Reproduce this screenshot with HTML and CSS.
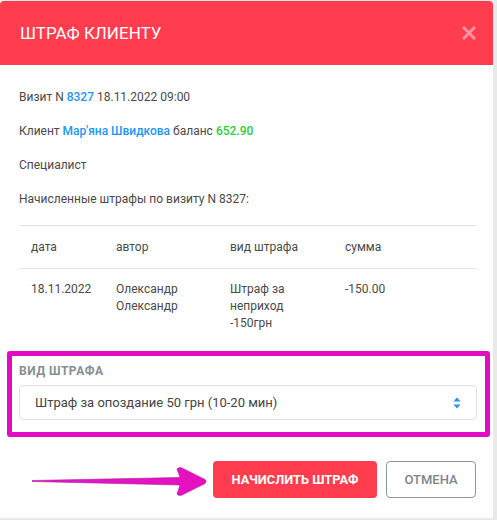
FILE: index.html
```html
<!DOCTYPE html>
<html lang="ru">
<head>
    <meta charset="UTF-8">
    <meta name="viewport" content="width=device-width, initial-scale=1.0">
    <title>Штраф клиенту</title>
    <link rel="stylesheet" href="styles.css">
</head>
<body>
    <div class="modal">
        <div class="modal-header">
            <h2>ШТРАФ КЛИЕНТУ</h2>
            <svg class="close" width="14" height="14" viewBox="0 0 14 14">
                <path d="M2 2 L12 12 M12 2 L2 12" stroke="#ffffff" stroke-width="3" stroke-linecap="square"/>
            </svg>
        </div>

        <div class="modal-body">
            <p>Визит N <a class="link">8327</a> 18.11.2022 09:00</p>
            <p>Клиент <a class="link">Мар'яна Швидкова</a> баланс <span class="balance">652.90</span></p>
            <p>Специалист</p>
            <p>Начисленные штрафы по визиту N 8327:</p>

            <table class="fines">
                <thead>
                    <tr>
                        <th class="c-date">дата</th>
                        <th class="c-author">автор</th>
                        <th class="c-type">вид штрафа</th>
                        <th>сумма</th>
                    </tr>
                </thead>
                <tbody>
                    <tr>
                        <td>18.11.2022</td>
                        <td>Олександр<br>Олександр</td>
                        <td>Штраф за<br>неприход<br>-150грн</td>
                        <td>-150.00</td>
                    </tr>
                </tbody>
            </table>

            <div class="form-group">
                <label>Вид штрафа</label>
                <div class="select">
                    <span>Штраф за опоздание 50 грн (10-20 мин)</span>
                    <svg width="8" height="12" viewBox="0 0 8 12">
                        <path d="M4 0.5 L7.5 4.5 L0.5 4.5 Z M4 11.5 L7.5 7.5 L0.5 7.5 Z" fill="#2196f3"/>
                    </svg>
                </div>
                <div class="highlight"></div>
            </div>
        </div>

        <div class="modal-footer">
            <svg class="pointer" width="180" height="34" viewBox="0 0 180 34">
                <defs>
                    <linearGradient id="ag" x1="0" y1="0" x2="1" y2="0">
                        <stop offset="0" stop-color="#d81fc6"/>
                        <stop offset="1" stop-color="#e60fbf"/>
                    </linearGradient>
                </defs>
                <path d="M0 15.5 L148 12.5 L145 4 Q147 1.5 150 3 L173 14.5 Q175 16.5 173 18.5 L150 30 Q147 31.5 145 29 L148 20 L0 16.5 Z" fill="url(#ag)" stroke="#b8139f" stroke-width="0.6"/>
            </svg>
            <button class="btn btn-danger">Начислить штраф</button>
            <button class="btn btn-outline">Отмена</button>
        </div>
    </div>
</body>
</html>
```

FILE: styles.css
```css
body {
    margin: 0;
    background-color: #e9e9ea;
    font-family: Roboto, "Liberation Sans", sans-serif;
}

.modal {
    width: 493px;
    margin-top: 1px;
    height: 517px;
    background: white;
    border-radius: 4px 4px 0 0;
    overflow: hidden;
    box-shadow: 0 1px 0 #c9c9c9;
}

.modal-header {
    height: 64px;
    background: #ff3d4f;
    display: flex;
    align-items: center;
    justify-content: space-between;
    padding: 0 16px 0 20px;
}

.modal-header h2 {
    margin: 0;
    font-size: 17px;
    font-weight: 400;
    color: white;
}

.close {
    opacity: 0.45;
    margin-right: 1px;
}

.modal-body {
    padding: 22px 16px 0 19px;
    font-size: 12px;
    color: #4a4a4a;
}

.modal-body p {
    margin: 0 0 14px;
    line-height: 20px;
}

.link {
    color: #2196f3;
    font-weight: 500;
}

.balance {
    color: #2ecc40;
    font-weight: 500;
}

.fines {
    width: 100%;
    margin-top: 16px;
    border-collapse: collapse;
    table-layout: fixed;
    font-size: 12px;
    color: #4a4a4a;
}

.fines th {
    text-align: left;
    font-weight: 400;
    height: 42px;
    padding: 0 12px;
    border-top: 1px solid #e4e4e4;
    border-bottom: 1px solid #e4e4e4;
}

.fines td {
    vertical-align: top;
    line-height: 17px;
    padding: 12px 12px 14px;
}

.c-date { width: 61px; }
.c-author { width: 90px; }
.c-type { width: 91px; }

.form-group {
    position: relative;
    margin-top: 7px;
    padding-top: 11px;
}

.form-group label {
    display: block;
    font-size: 12px;
    font-weight: 700;
    color: #868e96;
    text-transform: uppercase;
    letter-spacing: 0.5px;
    line-height: 14px;
    margin-bottom: 7px;
}

.select {
    height: 35px;
    border: 1px solid #e2e2e2;
    border-radius: 4px;
    display: flex;
    align-items: center;
    justify-content: space-between;
    padding: 0 15px;
    font-size: 13px;
    color: #444;
    box-sizing: border-box;
}

.highlight {
    position: absolute;
    left: -12px;
    right: -13px;
    top: -2px;
    bottom: -17px;
    border: 5px solid #e10cc4;
    border-radius: 3px;
}

.modal-footer {
    position: relative;
    display: flex;
    justify-content: flex-end;
    gap: 9px;
    padding: 41px 17px 20px 0;
}

.pointer {
    position: absolute;
    left: 32px;
    top: 45px;
}

.btn {
    height: 37px;
    border-radius: 4px;
    font-family: Roboto, "Liberation Sans", sans-serif;
    font-size: 12.8px;
    text-transform: uppercase;
    cursor: pointer;
}

.btn-danger {
    width: 164px;
    background: #ff3d4f;
    border: none;
    color: white;
    font-weight: 700;
}

.btn-outline {
    width: 90px;
    background: white;
    border: 1px solid #8f969c;
    color: #7d858c;
    font-weight: 500;
    font-size: 13px;
}
```
